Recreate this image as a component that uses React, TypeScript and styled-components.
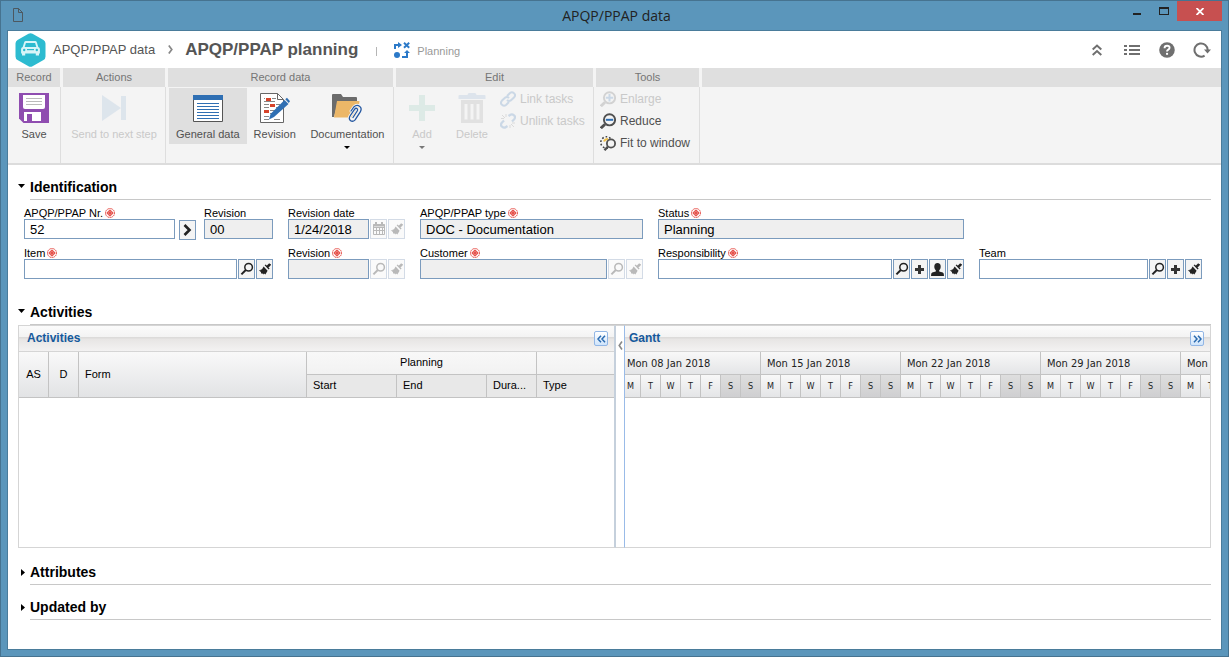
import React, { useId } from "react";
import styled, { createGlobalStyle, css } from "styled-components";

const GlobalStyle = createGlobalStyle`
  *, *::before, *::after { box-sizing: border-box; }
  body { margin: 0; font-family: "Liberation Sans", Arial, sans-serif; font-size: 11px; color: #000; background: #5b96bb; }
  button, input { font: inherit; color: inherit; margin: 0; }
  button { padding: 0; border: 0; background: none; }
  svg { display: block; flex: none; }
`;

/* ---------- window frame ---------- */

const Frame = styled.div`
  display: flex;
  flex-direction: column;
  min-height: 100vh;
  padding: 0 6px 6px;
  border: 1px solid #467390;
  background: #5b96bb;
`;

const TitleBar = styled.header`
  display: grid;
  grid-template-columns: 1fr auto 1fr;
  height: 29px;
  padding-left: 4px;
`;

const DocMark = styled.span`
  padding: 7px 0 0 2px;
`;

const WindowTitle = styled.h1`
  margin: 0;
  font: 400 14px/29px "Open Sans", "Noto Sans", sans-serif;
  color: #222;
`;

const WindowButtons = styled.div`
  display: flex;
  justify-content: flex-end;
  align-items: flex-start;
`;

const WindowButton = styled.button<{ $close?: boolean }>`
  display: flex;
  align-items: center;
  justify-content: center;
  width: ${(p) => (p.$close ? 45 : 27)}px;
  height: 20px;
  color: ${(p) => (p.$close ? "#fff" : "#222")};
  background: ${(p) => (p.$close ? "#c75050" : "transparent")};
`;

const Client = styled.main`
  flex: 1;
  border: 1px solid #4a7c9b;
  background: #fff;
`;

/* ---------- page header ---------- */

const PageHeader = styled.div`
  display: flex;
  align-items: center;
  height: 37px;
  padding: 0 10px 0 7px;
  color: #555;
`;

const Crumb = styled.a`
  margin: 0 13px 0 7px;
  font-size: 13px;
  color: #555;
  text-decoration: none;
`;

const PageTitle = styled.h2`
  margin: 0 18px 0 12px;
  font-size: 17px;
  line-height: 20px;
  color: #555;
`;

const Divider = styled.span`
  width: 1px;
  height: 9px;
  margin: 3px 17px 0 0;
  background: #b5b5b5;
`;

const StepName = styled.span`
  margin: 2px auto 0 7px;
  color: #999;
`;

const HeaderTools = styled.div`
  display: flex;
  gap: 17px;
`;

const HeaderTool = styled.button`
  display: flex;
  align-items: center;
  justify-content: center;
  width: 18px;
  height: 18px;
  color: #6f6f6f;
`;

/* ---------- ribbon ---------- */

const Ribbon = styled.div`
  display: flex;
  gap: 2px;
  height: 97px;
  background: #f4f4f4;
  border-bottom: 2px solid #dcdcdc;
`;

const Group = styled.section<{ $width?: number }>`
  display: flex;
  flex-direction: column;
  ${(p) => (p.$width ? `flex: none; width: ${p.$width}px;` : "flex: 1;")}
`;

const GroupTitle = styled.h3<{ $last?: boolean }>`
  height: 19px;
  margin: 0 ${(p) => (p.$last ? 0 : 1)}px 0 0;
  font-size: 11px;
  font-weight: 400;
  line-height: 19px;
  text-align: center;
  color: #757575;
  background: #dfdfdf;
`;

const GroupBody = styled.div`
  display: flex;
  flex: 1;
  align-items: flex-start;
  padding: 1px 1px 0;
  border-right: 1px solid #dedede;
`;

const BigButton = styled.button<{ $active?: boolean; $fill?: boolean }>`
  display: flex;
  flex-direction: column;
  align-items: center;
  ${(p) => p.$fill && "flex: 1;"}
  min-width: 50px;
  min-height: 56px;
  padding: 5px 7px 0;
  line-height: 14px;
  white-space: nowrap;
  color: #505050;
  background: ${(p) => (p.$active ? "#dfdfdf" : "transparent")};
  &:disabled { color: #c9c9c9; }
`;

const BigIcon = styled.span<{ $faded?: boolean }>`
  margin-bottom: 4px;
  opacity: ${(p) => (p.$faded ? 0.11 : 1)};
`;

const Caret = styled.span<{ $dim?: boolean }>`
  margin-top: 5px;
  border: 3px solid transparent;
  border-top-color: ${(p) => (p.$dim ? "#777" : "#000")};
  border-bottom: 0;
`;

const Stack = styled.div`
  display: flex;
  flex-direction: column;
`;

const SmallButton = styled.button`
  display: flex;
  align-items: center;
  gap: 4px;
  height: 22px;
  padding: 0 3px;
  font-size: 12px;
  white-space: nowrap;
  color: #505050;
  &:disabled { color: #c9c9c9; }
  &:disabled svg { opacity: 0.2; }
`;

/* ---------- sections and fields ---------- */

const Content = styled.div`
  padding: 10px 10px 20px;
`;

const SectionHead = styled.button`
  display: flex;
  width: 100%;
  height: 25px;
  text-align: left;
`;

const Marker = styled.span<{ $open?: boolean }>`
  width: 12px;
  padding: ${(p) => (p.$open ? "9px 0 0" : "9px 0 0 3px")};
`;

const SectionTitle = styled.span`
  flex: 1;
  height: 25px;
  border-bottom: 1px solid #c8c8c8;
  font-size: 14px;
  font-weight: 700;
  line-height: 24px;
`;

const Gap = styled.div<{ $size: number }>`
  height: ${(p) => p.$size}px;
`;

const Form = styled.form`
  display: grid;
  grid-template-columns:
    minmax(0, 249fr) minmax(0, 117fr) minmax(0, 223fr) minmax(0, 306fr) minmax(0, 223fr);
  gap: 8px 15px;
  padding: 7px 9px 21px 6px;
`;

const Pair = styled.div`
  display: grid;
  grid-template-columns: 1fr 69px;
  gap: 8px;
`;

const FieldBox = styled.div<{ $start?: boolean }>`
  min-width: 0;
  ${(p) => p.$start && "grid-column: 1;"}
`;

const Label = styled.label`
  display: flex;
  align-items: center;
  gap: 2px;
  height: 12px;
  line-height: 12px;
  white-space: nowrap;
`;

const Controls = styled.div`
  display: flex;
  gap: 1px;
`;

const Input = styled.input`
  flex: 1;
  width: 0;
  min-width: 0;
  height: 20px;
  padding: 0 5px;
  border: 1px solid #7b9bbd;
  border-radius: 0;
  background: #fff;
  font-size: 13px;
  outline: 0;
  &:read-only { background: #efefef; }
`;

const IconButton = styled.button<{ $go?: boolean }>`
  display: flex;
  align-items: center;
  justify-content: center;
  width: 17px;
  height: 20px;
  border: 1px solid #7b9bbd;
  background: #f4f4f4;
  color: #222;
  ${(p) => p.$go && css`margin: 1px 0 -1px 3px;`}
  &:disabled { border-color: #d3dbe6; background: #fafafa; color: #b9b9b9; }
`;

/* ---------- activities / gantt ---------- */

const Split = styled.div`
  display: grid;
  grid-template-columns: minmax(0, 598fr) 8px minmax(0, 587fr);
  min-height: 223px;
`;

const edge = "1px solid #d5d5d5";

const Pane = styled.section<{ $gantt?: boolean }>`
  overflow: hidden;
  border-top: ${edge};
  border-bottom: ${edge};
  border-left: ${(p) => (p.$gantt ? "1px solid #99bbe8" : edge)};
  border-right: ${(p) => (p.$gantt ? edge : "2px solid #c5d0dc")};
`;

const PaneHead = styled.div<{ $tight?: boolean }>`
  display: flex;
  align-items: center;
  justify-content: space-between;
  height: 26px;
  padding: 0 6px 0 ${(p) => (p.$tight ? 4 : 8)}px;
  border-bottom: 1px solid #d5d5d5;
  background: linear-gradient(#fbfbfb 0, #f3f3f3 11px, #dcdbda 11px, #dcdbda 12px, #e7e5e4 13px, #f3f2f2 25px);
`;

const PaneTitle = styled.h4`
  margin: 0;
  padding-bottom: 2px;
  font-size: 12px;
  line-height: 14px;
  color: #15599c;
`;

const PaneTool = styled.button`
  display: flex;
  align-items: center;
  justify-content: center;
  width: 14px;
  height: 15px;
  border: 1px solid #92b6e5;
  border-radius: 2px;
  background: linear-gradient(#fff, #cfe4fb);
  color: #2a6bb0;
`;

const Splitter = styled.div`
  display: flex;
  justify-content: center;
  padding-top: 15px;
  border-top: ${edge};
  border-bottom: ${edge};
  color: #888;
`;

const line = "1px solid #c3c3c3";

const Table = styled.table`
  width: 100%;
  table-layout: fixed;
  border-spacing: 0;
`;

const Th = styled.th<{ $center?: boolean; $sub?: boolean; $end?: boolean }>`
  height: 23px;
  padding: 0 6px 2px;
  border-right: ${(p) => (p.$end ? "0" : line)};
  border-bottom: ${line};
  background: ${(p) => (p.$sub ? "#e8e8e8" : "linear-gradient(#f8f8f8, #f2f2f2)")};
  font-weight: 400;
  line-height: 14px;
  white-space: nowrap;
  text-align: ${(p) => (p.$center ? "center" : "left")};
  &[rowspan] { background: linear-gradient(#f9f9f9, #e2e3e5); }
`;

const Timeline = styled.table`
  width: 600px;
  margin-left: -4px;
  table-layout: fixed;
  border-spacing: 0;
  font-family: "DejaVu Sans Condensed", "DejaVu Sans", sans-serif;
  color: #222;
`;

const Week = styled.th`
  height: 23px;
  padding: 0 0 0 6px;
  border-right: ${line};
  border-bottom: ${line};
  background: linear-gradient(#f8f8f8, #e4e5e7);
  font-weight: 400;
  text-align: left;
  white-space: nowrap;
`;

const Day = styled.th<{ $off?: boolean }>`
  height: 23px;
  padding: 0;
  border-right: ${line};
  border-bottom: ${line};
  background: ${(p) => (p.$off ? "linear-gradient(#dedede, #cfcfd1)" : "linear-gradient(#f8f8f8, #e4e5e7)")};
  font-size: 9px;
  font-weight: 400;
  text-align: center;
`;

/* ---------- icons ---------- */

const RequiredMark = () => (
  <svg width="10" height="10" viewBox="0 0 10 10" aria-label="required" fill="none" stroke="#e0241c">
    <circle cx="5" cy="5" r="4.5" strokeWidth="0.9" strokeDasharray="1.4 0.6" />
    <circle cx="5" cy="3.200" r="1.100" />
    <circle cx="5" cy="6.800" r="1.100" />
    <circle cx="3.200" cy="5" r="1.100" />
    <circle cx="6.800" cy="5" r="1.100" />
  </svg>
);

const fieldIcons = {
  search: (
    <svg width="14" height="14" viewBox="0 0 14 14" fill="none" stroke="currentColor">
      <circle cx="8.600" cy="5.200" r="3.800" strokeWidth="1.500" />
      <path d="M5.800 8L1.400 12.400" strokeWidth="2" />
    </svg>
  ),
  clear: (
    <svg width="14" height="14" viewBox="0 0 14 14" fill="currentColor">
      <path d="M11.200 1.200l1.700 1.600-3 3.100-1.700-1.600z" />
      <path d="M10.600 3.600l1.700-1.600.6.800-1.500 1.900z" />
      <path d="M6.600 3.200l1-.8 4 4.200-1 1z" />
      <path d="M5.600 4.600l4 4.200-2.200 3.800-1.400-1-.6 1-1.300-1.400-.9.500-.3-1.600L.8 8.200l1.800.1.300-1.100 1 .4z" />
    </svg>
  ),
  add: (
    <svg width="9" height="9" viewBox="0 0 9 9">
      <path d="M3 0h3v3h3v3H6v3H3V6H0V3h3z" fill="#333" />
    </svg>
  ),
  user: (
    <svg width="13" height="13" viewBox="0 0 13 13" fill="currentColor">
      <ellipse cx="6.500" cy="3.700" rx="3.200" ry="3.700" />
      <path d="M4.800 6h3.400v2.400l3.600 1.200Q13 10 13 13H0q0-3 1.200-3.400l3.600-1.200z" />
    </svg>
  ),
  calendar: (
    <svg width="14" height="14" viewBox="0 0 14 14" fill="none" stroke="currentColor">
      <path d="M1.500 2.500h11v10h-11zM1.500 5.500h11M1.500 8.500h11M4.500 5v8M7.500 5v8M10.500 5v8" />
      <path d="M4 0v4M10 0v4M1 3.500h12" strokeWidth="2" />
    </svg>
  ),
};

type IconName = keyof typeof fieldIcons;

const iconLabels: Record<IconName, string> = {
  search: "Search",
  clear: "Clear",
  add: "Add",
  user: "Myself",
  calendar: "Calendar",
};

const Chevrons = ({ flip }: { flip?: boolean }) => (
  <svg width="9" height="8" viewBox="0 0 9 8" fill="none" stroke="currentColor" strokeWidth="1.500">
    <path d={flip ? "M1 .7l3 3.300-3 3.300M5 .7l3 3.300-3 3.300" : "M4 .7L1 4l3 3.300M8 .7L5 4l3 3.300"} />
  </svg>
);

const OpenMark = () => (
  <svg width="7" height="4" viewBox="0 0 7 4"><path d="M0 0h7L3.500 4z" /></svg>
);
const ClosedMark = () => (
  <svg width="4" height="7" viewBox="0 0 4 7"><path d="M0 0l4 3.500L0 7z" /></svg>
);

const Logo = () => (
  <svg width="31" height="34" viewBox="0 0 31 34">
    <path d="M13.500 .8q2-1.100 4 0l11 6.200q2 1.100 2 3.400v13.200q0 2.300-2 3.400l-11 6.200q-2 1.100-4 0l-11-6.200q-2-1.100-2-3.400V10.400q0-2.300 2-3.400z" fill="#2cbbd0" />
    <path d="M9.200 9.200q.4-1.200 1.600-1.200h9.400q1.200 0 1.600 1.200l1.500 4.700q1.600.6 1.600 2.200v4.300H6.100v-4.300q0-1.600 1.600-2.200zM7 20.400h3.200v2.200H7zM20.800 20.400H24v2.200h-3.200z" fill="#d8f5f8" />
    <path d="M10.900 10h9.200l1.200 4H9.700z" fill="#2cbbd0" />
    <circle cx="9.200" cy="17" r="1.200" fill="#2cbbd0" />
    <circle cx="21.800" cy="17" r="1.200" fill="#2cbbd0" />
    <path d="M12 16.600h7" stroke="#2cbbd0" strokeWidth="1.200" />
  </svg>
);

const FlowIcon = () => (
  <svg width="16" height="16" viewBox="0 0 16 16" fill="#2b79c8">
    <circle cx="3" cy="13" r="3" />
    <path d="M0 7V2h4V0l4 3-4 3V4H2v3z" />
    <path d="M10 .8l5.200 5M15.200.8l-5.200 5" stroke="#2b79c8" strokeWidth="1.900" />
    <path d="M8 14h4v-3h-2L13 8l3 3h-2v5H8z" />
  </svg>
);

const SaveIcon = () => (
  <svg width="30" height="30" viewBox="0 0 30 30">
    <path d="M0 0h30v30H4.500L0 25.500z" fill="#8f4db0" />
    <path d="M4 2h22v12q0 2-2 2H6q-2 0-2-2z" fill="#fff" />
    <path d="M7 5.500h16M7 8.500h16M7 11.500h16" stroke="#bbb" />
    <path d="M5 19h17v9H5z" fill="#fff" />
    <path d="M8 21h5v7H8z" fill="#8f4db0" />
  </svg>
);

const NextIcon = () => (
  <svg width="30" height="30" viewBox="0 0 30 30" fill="#2f74b5">
    <path d="M3 2l19 13L3 28zM22 3h5v24h-5z" />
  </svg>
);

const GeneralIcon = () => (
  <svg width="30" height="30" viewBox="0 0 30 30">
    <path d="M.5 2.500h29v26H.5z" fill="#fff" stroke="#555" />
    <path d="M0 2h30v5H0z" fill="#2f6fb3" />
    <path d="M4 10.500h22M4 13.500h22M4 16.500h22M4 19.500h22M4 22.500h22M4 25.500h22" stroke="#2f6fb3" />
  </svg>
);

const RevisionIcon = () => (
  <svg width="30" height="30" viewBox="0 0 30 30">
    <path d="M.5.500h17l6 6v23H.5z" fill="#fff" stroke="#666" />
    <path d="M17.500.500v6h6" fill="none" stroke="#666" />
    <path d="M4 5.500h1M12 5.500h4M4 8.500h11M4 11.500h5M16 11.500h4M4 14.500h5M16 14.500h3M10 17.500h6M10 20.500h4M4 23.500h5M4 26.500h5M14 26.500h6" stroke="#888" />
    <path d="M6 5h5v3H6zM10 11h5v3h-5zM4 17h5v3H4z" fill="#d6432a" />
    <path d="M24.500 7l4 4L14 24l-5 2.500 1.500-5.500z" fill="#2f6fb3" />
    <path d="M25.300 6.200l1.700-1.500 3 3.500-1.300 1.800z" fill="#2f6fb3" />
  </svg>
);

const DocumentationIcon = () => (
  <svg width="30" height="30" viewBox="0 0 30 30">
    <path d="M0 2q0-1 1-1h8l2 3h13q1 0 1 1v4H6L2 24H0z" fill="#6b6b6b" />
    <path d="M5 8h22.500l-2 16.500H2z" fill="#ecb768" />
    <g fill="none" strokeLinecap="round" strokeLinejoin="round">
      <path id="clip" d="M21 24.500l4.200-6.500q.9-1.800-.3-2.500t-2.400.8L18 23q-1.600 3.200.6 4.700t4.500-.8l5.200-8q2-3.800-.8-5.700t-5.700.8l-2.800 4" stroke="#f4f4f4" strokeWidth="3" />
      <path d="M21 24.500l4.200-6.500q.9-1.800-.3-2.500t-2.400.8L18 23q-1.600 3.200.6 4.700t4.500-.8l5.200-8q2-3.800-.8-5.700t-5.700.8l-2.800 4" stroke="#2457a0" strokeWidth="1.300" />
    </g>
  </svg>
);

const AddIcon = () => (
  <svg width="30" height="30" viewBox="0 0 30 30"><path d="M12 2h6v10h10v6H18v10h-6V18H2v-6h10z" fill="#2fa37c" /></svg>
);

const DeleteIcon = () => (
  <svg width="30" height="30" viewBox="0 0 30 30">
    <path d="M1.500 6V3q0-1 1-1h8q1-3 4.500-3t4.500 3h8q1 0 1 1v3z" fill="#2f6fb3" />
    <path fillRule="evenodd" d="M4 7h22v24H4zM7.500 11v15.500h3V11zM13.500 11v15.500h3V11zM19.500 11v15.500h3V11z" fill="#555" />
  </svg>
);

const LinkIcon = () => (
  <svg width="16" height="16" viewBox="0 0 16 16" fill="none" stroke="#2f6fb3" strokeWidth="2">
    <path d="M7 5l3-3q2-1.500 4 .2t.2 4l-3.400 3.200q-2 1.400-3.800-.4" />
    <path d="M9 11l-3 3q-2 1.500-4-.2t-.2-4l3.400-3.200q2-1.400 3.800.4" />
  </svg>
);
const UnlinkIcon = () => (
  <svg width="16" height="16" viewBox="0 0 16 16" fill="none">
    <path d="M8.500 3l1.500-1q2-1.400 4 .3t.2 3.900L12 8.500M7.500 13L6 14q-2 1.400-4-.3t-.2-3.900L4 7.500" stroke="#2f6fb3" strokeWidth="2.200" />
    <path d="M6 1v3M2 2l3 3M1 5.500h3M10 12v3M11 11l3 3M12 10h3" stroke="#777" />
  </svg>
);

const Magnifier = ({ plus }: { plus?: boolean }) => (
  <svg width="16" height="16" viewBox="0 0 16 16" fill="none">
    <circle cx="9.500" cy="6.800" r="5.600" stroke="#505050" strokeWidth="1.900" />
    <path d="M5 11.300L.9 15.200" stroke="#505050" strokeWidth="2.800" />
    <path d={plus ? "M5.800 6.800h7.400M9.500 3.100v7.400" : "M5.800 6.800h7.400"} stroke="#2f6fb3" strokeWidth="2" />
  </svg>
);

const FitIcon = () => (
  <svg width="16" height="16" viewBox="0 0 16 16" fill="none">
    <circle cx="6.500" cy="7.500" r="5.700" stroke="#444" strokeWidth="1.500" strokeDasharray="1.700 1.900" />
    <path d="M4 6.500q1-2.500 4-2.500" stroke="#f0c04a" strokeWidth="2" />
    <circle cx="11" cy="8.500" r="4.100" fill="#f4f4f4" stroke="#505050" strokeWidth="1.800" />
    <path d="M7.800 11.700L4.500 15.200" stroke="#505050" strokeWidth="2.400" />
  </svg>
);

/* ---------- composed parts ---------- */

type FieldProps = {
  label: string;
  value?: string;
  required?: boolean;
  readOnly?: boolean;
  icons?: IconName[];
  disabledIcons?: boolean;
  go?: boolean;
  start?: boolean;
};

function Field({ label, value = "", required, readOnly, icons = [], disabledIcons, go, start }: FieldProps) {
  const id = useId();
  return (
    <FieldBox $start={start}>
      <Label htmlFor={id}>
        {label}
        {required && <RequiredMark />}
      </Label>
      <Controls>
        <Input id={id} type="text" defaultValue={value} readOnly={readOnly} />
        {go && (
          <IconButton type="button" $go aria-label="Open">
            <svg width="9" height="12" viewBox="0 0 9 12" fill="none" stroke="currentColor" strokeWidth="2.600">
              <path d="M1.500 1l5 5-5 5" />
            </svg>
          </IconButton>
        )}
        {icons.map((name) => (
          <IconButton key={name} type="button" disabled={disabledIcons} aria-label={iconLabels[name]}>
            {fieldIcons[name]}
          </IconButton>
        ))}
      </Controls>
    </FieldBox>
  );
}

function Section({ title, open }: { title: string; open?: boolean }) {
  return (
    <SectionHead type="button" aria-expanded={!!open}>
      <Marker $open={open}>{open ? <OpenMark /> : <ClosedMark />}</Marker>
      <SectionTitle>{title}</SectionTitle>
    </SectionHead>
  );
}

const weeks = [
  { label: "Mon 08 Jan 2018", days: "MTWTFSS" },
  { label: "Mon 15 Jan 2018", days: "MTWTFSS" },
  { label: "Mon 22 Jan 2018", days: "MTWTFSS" },
  { label: "Mon 29 Jan 2018", days: "MTWTFSS" },
  { label: "Mon", days: "MT" },
];

export default function App() {
  return (
    <Frame>
      <GlobalStyle />
      <TitleBar>
        <DocMark>
          <svg width="10" height="14" viewBox="0 0 10 14" fill="none" stroke="#4d5860">
            <path d="M.5.500h5l4 4v9H.5zM5.500.500v4h4" />
          </svg>
        </DocMark>
        <WindowTitle>APQP/PPAP data</WindowTitle>
        <WindowButtons>
          <WindowButton aria-label="Minimize">
            <svg width="8" height="10" viewBox="0 0 8 10"><path d="M0 7h8v2H0z" fill="currentColor" /></svg>
          </WindowButton>
          <WindowButton aria-label="Maximize">
            <svg width="10" height="8" viewBox="0 0 10 8"><path fillRule="evenodd" d="M0 0h10v8H0zM1 2v5h8V2z" fill="currentColor" /></svg>
          </WindowButton>
          <WindowButton $close aria-label="Close">
            <svg width="8" height="7" viewBox="0 0 8 7" stroke="currentColor" strokeWidth="1.800"><path d="M.5 0l7 7M7.500 0l-7 7" /></svg>
          </WindowButton>
        </WindowButtons>
      </TitleBar>

      <Client>
        <PageHeader>
          <Logo />
          <Crumb href="#data">APQP/PPAP data</Crumb>
          <svg width="5" height="9" viewBox="0 0 5 9" fill="none" stroke="#888" strokeWidth="1.700"><path d="M.8.500l3 4-3 4" /></svg>
          <PageTitle>APQP/PPAP planning</PageTitle>
          <Divider />
          <FlowIcon />
          <StepName>Planning</StepName>
          <HeaderTools>
            <HeaderTool aria-label="Collapse">
              <svg width="10" height="12" viewBox="0 0 10 12" fill="none" stroke="currentColor" strokeWidth="2"><path d="M.7 5.500L5 1.500l4.300 4M.7 11L5 7l4.300 4" /></svg>
            </HeaderTool>
            <HeaderTool aria-label="List">
              <svg width="16" height="10" viewBox="0 0 16 10" fill="currentColor"><path d="M0 0h3v2H0zM5 0h11v2H5zM0 4h3v2H0zM5 4h11v2H5zM0 8h3v2H0zM5 8h11v2H5z" /></svg>
            </HeaderTool>
            <HeaderTool aria-label="Help">
              <svg width="16" height="16" viewBox="0 0 15 15">
                <circle cx="7.500" cy="7.500" r="7.300" fill="currentColor" />
                <path d="M5.200 5.800q0-2.300 2.400-2.300t2.300 2q0 1-1.200 1.700T7.500 9" fill="none" stroke="#fff" strokeWidth="1.800" />
                <path d="M6.600 10.200h1.900v1.800H6.600z" fill="#fff" />
              </svg>
            </HeaderTool>
            <HeaderTool aria-label="Refresh">
              <svg width="18" height="16" viewBox="0 0 18 16" fill="none" stroke="currentColor" strokeWidth="2">
                <path d="M11.600 13.600A6.600 6.600 0 1 1 14.700 8" />
                <path d="M11 7.500h7l-3.500 4z" fill="currentColor" stroke="none" />
              </svg>
            </HeaderTool>
          </HeaderTools>
        </PageHeader>

        <Ribbon>
          <Group $width={53}>
            <GroupTitle>Record</GroupTitle>
            <GroupBody>
              <BigButton><BigIcon><SaveIcon /></BigIcon>Save</BigButton>
            </GroupBody>
          </Group>
          <Group $width={103}>
            <GroupTitle>Actions</GroupTitle>
            <GroupBody>
              <BigButton disabled $fill><BigIcon $faded><NextIcon /></BigIcon>Send to next step</BigButton>
            </GroupBody>
          </Group>
          <Group $width={226}>
            <GroupTitle>Record data</GroupTitle>
            <GroupBody>
              <BigButton $active><BigIcon><GeneralIcon /></BigIcon>General data</BigButton>
              <BigButton><BigIcon><RevisionIcon /></BigIcon>Revision</BigButton>
              <BigButton $fill><BigIcon><DocumentationIcon /></BigIcon>Documentation<Caret /></BigButton>
            </GroupBody>
          </Group>
          <Group $width={198}>
            <GroupTitle>Edit</GroupTitle>
            <GroupBody>
              <BigButton disabled><BigIcon $faded><AddIcon /></BigIcon>Add<Caret $dim /></BigButton>
              <BigButton disabled><BigIcon $faded><DeleteIcon /></BigIcon>Delete</BigButton>
              <Stack>
                <SmallButton disabled><LinkIcon />Link tasks</SmallButton>
                <SmallButton disabled><UnlinkIcon />Unlink tasks</SmallButton>
              </Stack>
            </GroupBody>
          </Group>
          <Group $width={104}>
            <GroupTitle>Tools</GroupTitle>
            <GroupBody>
              <Stack>
                <SmallButton disabled><Magnifier plus />Enlarge</SmallButton>
                <SmallButton><Magnifier />Reduce</SmallButton>
                <SmallButton><FitIcon />Fit to window</SmallButton>
              </Stack>
            </GroupBody>
          </Group>
          <Group>
            <GroupTitle as="div" $last />
          </Group>
        </Ribbon>

        <Content>
          <Section title="Identification" open />
          <Form>
            <Pair>
              <Field label="APQP/PPAP Nr." value="52" required go />
              <Field label="Revision" value="00" readOnly />
            </Pair>
            <Field label="Revision date" value="1/24/2018" readOnly icons={["calendar", "clear"]} disabledIcons />
            <Field label="APQP/PPAP type" value="DOC - Documentation" required readOnly />
            <Field label="Status" value="Planning" required readOnly />
            <Field label="Item" required icons={["search", "clear"]} start />
            <Field label="Revision" required readOnly icons={["search", "clear"]} disabledIcons />
            <Field label="Customer" required readOnly icons={["search", "clear"]} disabledIcons />
            <Field label="Responsibility" required icons={["search", "add", "user", "clear"]} />
            <Field label="Team" icons={["search", "add", "clear"]} />
          </Form>

          <Section title="Activities" open />
          <Split>
            <Pane>
              <PaneHead>
                <PaneTitle>Activities</PaneTitle>
                <PaneTool aria-label="Collapse activities"><Chevrons /></PaneTool>
              </PaneHead>
              <Table>
                <colgroup>
                  <col width="30" /><col width="30" /><col />
                  <col width="90" /><col width="90" /><col width="50" /><col width="77" />
                </colgroup>
                <thead>
                  <tr>
                    <Th rowSpan={2} $center>AS</Th>
                    <Th rowSpan={2} $center>D</Th>
                    <Th rowSpan={2}>Form</Th>
                    <Th colSpan={3} $center>Planning</Th>
                    <Th $end />
                  </tr>
                  <tr>
                    <Th $sub>Start</Th>
                    <Th $sub>End</Th>
                    <Th $sub>Dura...</Th>
                    <Th $sub $end>Type</Th>
                  </tr>
                </thead>
              </Table>
            </Pane>
            <Splitter>
              <svg width="5" height="9" viewBox="0 0 5 9" fill="none" stroke="currentColor" strokeWidth="1.600"><path d="M4 .5L1.200 4.500 4 8.500" /></svg>
            </Splitter>
            <Pane $gantt>
              <PaneHead $tight>
                <PaneTitle>Gantt</PaneTitle>
                <PaneTool aria-label="Expand gantt"><Chevrons flip /></PaneTool>
              </PaneHead>
              <Timeline>
                <thead>
                  <tr>
                    {weeks.map((w) => (
                      <Week key={w.label} colSpan={w.days.length}>{w.label}</Week>
                    ))}
                  </tr>
                  <tr>
                    {weeks.flatMap((w) =>
                      w.days.split("").map((d, i) => (
                        <Day key={w.label + i} $off={i > 4}>{d}</Day>
                      ))
                    )}
                  </tr>
                </thead>
              </Timeline>
            </Pane>
          </Split>
          <Gap $size={12} />

          <Section title="Attributes" />
          <Gap $size={10} />
          <Section title="Updated by" />
        </Content>
      </Client>
    </Frame>
  );
}
